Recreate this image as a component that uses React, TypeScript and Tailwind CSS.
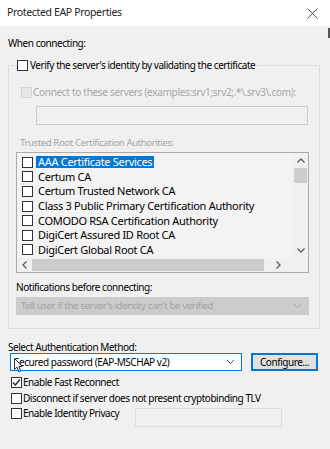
import React from "react";

const font = { fontFamily: '"Noto Sans", "Segoe UI", sans-serif' };

function Box({ checked = false, disabled = false }: { checked?: boolean; disabled?: boolean }) {
  return (
    <span
      className={`flex h-[11px] w-[11px] shrink-0 items-center justify-center border ${
        disabled ? "border-[#d4d4d4] bg-[#e8e8e8]" : "border-[#333333] bg-white"
      }`}
    >
      {checked && (
        <svg width="9" height="9" viewBox="0 0 9 9" fill="none">
          <path d="M1 4.5 L3.4 7 L8 1.5" stroke="#222" strokeWidth="1.3" />
        </svg>
      )}
    </span>
  );
}

function Chevron({ color = "#555" }: { color?: string }) {
  return (
    <svg width="9" height="6" viewBox="0 0 9 6" fill="none">
      <path d="M1 1 L4.5 4.5 L8 1" stroke={color} strokeWidth="1" />
    </svg>
  );
}

const certs = [
  "AAA Certificate Services",
  "Certum CA",
  "Certum Trusted Network CA",
  "Class 3 Public Primary Certification Authority",
  "COMODO RSA Certification Authority",
  "DigiCert Assured ID Root CA",
  "DigiCert Global Root CA",
];

export default function App() {
  return (
    <div
      className="relative h-[449px] w-[330px] overflow-hidden bg-[#f0f0f0] text-[10px] tracking-[-0.45px] text-black"
      style={font}
    >
      {/* title bar */}
      <div className="flex h-[26px] items-center justify-between bg-white pl-[7px] pr-[12px]">
        <span className="text-[10.5px] tracking-[-0.35px] text-[#222]">Protected EAP Properties</span>
        <svg width="11" height="11" viewBox="0 0 11 11" fill="none">
          <path d="M0.5 0.5 L10.5 10.5 M10.5 0.5 L0.5 10.5" stroke="#444" strokeWidth="0.9" />
        </svg>
      </div>
      <div className="absolute right-0 top-[28px] h-[10px] w-[2px] bg-[#555]" />

      <div className="mt-[9px] flex h-[16px] items-center pl-[8px]">When connecting:</div>

      {/* group box */}
      <div className="ml-[8px] mt-[14px] h-[264px] w-[312px] border border-[#dcdcdc]">
        <div className="-mt-[9px] ml-[8px] flex h-[16px] w-fit items-center gap-[2px] bg-[#f0f0f0] pr-[2px]">
          <Box />
          <span>Verify the server's identity by validating the certificate</span>
        </div>

        <div className="ml-[12px] mt-[11px] flex h-[16px] items-center gap-[1px] tracking-[-0.3px] text-[#a6a6a6]">
          <Box disabled />
          <span>Connect to these servers (examples:srv1;srv2;.*\.srv3\.com):</span>
        </div>

        <div className="ml-[27px] mt-[6px] h-[19px] w-[272px] border border-[#cccccc] bg-[#f0f0f0]" />

        <div className="ml-[11px] mt-[10px] flex h-[16px] items-center text-[9.7px] text-[#a6a6a6]">
          Trusted Root Certification Authorities:
        </div>

        {/* list */}
        <div className="ml-[7px] mt-[1px] flex h-[121px] w-[293px] flex-col border border-[#ababab] bg-[#f3f3f3]">
          <div className="flex h-[105px]">
            <div className="flex-1 overflow-hidden pt-[2px] text-[11px] tracking-[-0.3px]">
              {certs.map((c, i) => (
                <div key={c} className="flex h-[14.6px] items-center gap-[3px] pl-[5px] whitespace-nowrap">
                  <Box />
                  <span className={i === 0 ? "bg-[#0078d7] px-[2px] leading-[12px] text-white" : "px-[2px] leading-[12px]"}>
                    {c}
                  </span>
                </div>
              ))}
            </div>
            <div className="flex w-[15px] flex-col items-center bg-[#f0f0f0]">
              <div className="flex h-[15px] items-center justify-center">
                <svg width="8" height="5" viewBox="0 0 8 5" fill="none">
                  <path d="M0.5 4.5 L4 1 L7.5 4.5" stroke="#606060" strokeWidth="1.3" />
                </svg>
              </div>
              <div className="h-[15px] w-[13px] bg-[#cdcdcd]" />
              <div className="flex-1" />
              <div className="flex h-[15px] items-center justify-center">
                <svg width="8" height="5" viewBox="0 0 8 5" fill="none">
                  <path d="M0.5 0.5 L4 4 L7.5 0.5" stroke="#606060" strokeWidth="1.3" />
                </svg>
              </div>
            </div>
          </div>
          <div className="flex h-[14px] items-center bg-[#f0f0f0]">
            <div className="flex h-full w-[15px] items-center justify-center">
              <svg width="5" height="8" viewBox="0 0 5 8" fill="none">
                <path d="M4.5 0.5 L1 4 L4.5 7.5" stroke="#606060" strokeWidth="1.3" />
              </svg>
            </div>
            <div className="h-[12px] w-[232px] bg-[#cdcdcd]" />
            <div className="flex h-full flex-1 items-center justify-center">
              <svg width="5" height="8" viewBox="0 0 5 8" fill="none">
                <path d="M0.5 0.5 L4 4 L0.5 7.5" stroke="#606060" strokeWidth="1.3" />
              </svg>
            </div>
            <div className="h-full w-[15px] bg-[#f0f0f0]" />
          </div>
        </div>

        <div className="ml-[7px] mt-[6px] flex h-[16px] items-center">Notifications before connecting:</div>

        <div className="ml-[7px] mt-[2px] flex h-[18px] w-[293px] items-center justify-between border border-[#cccccc] bg-[#cccccc] pl-[4px] pr-[6px] text-[9.8px] text-[#a3a3a3]">
          <span>Tell user if the server's identity can't be verified</span>
          <Chevron color="#a8a8a8" />
        </div>
      </div>

      <div className="mt-[10px] flex h-[16px] items-center pl-[8px]">Select Authentication Method:</div>

      <div className="mt-[-2px] flex items-center pl-[10px]">
        <div className="relative flex h-[18px] w-[232px] items-center justify-between border border-[#0078d7] bg-white pl-[3px] pr-[6px]">
          <span>Secured password (EAP-MSCHAP v2)</span>
          <Chevron />
          <svg className="absolute left-[3px] top-[4px]" width="10" height="15" viewBox="0 0 10 15">
            <path d="M0.5 0.5 L0.5 11.5 L3 9.2 L5 13.8 L6.8 13 L4.8 8.5 L8.2 8.5 Z" fill="white" stroke="black" strokeWidth="0.8" />
          </svg>
        </div>
        <div className="ml-[9px] flex h-[18px] w-[67px] items-center justify-center border-2 border-[#0078d7] bg-[#e1e1e1]">
          Configure...
        </div>
      </div>

      <div className="mt-[4px] flex h-[15.5px] items-center gap-[1px] pl-[11px]">
        <Box checked />
        <span>Enable Fast Reconnect</span>
      </div>
      <div className="flex h-[15.5px] items-center gap-[1px] pl-[11px]">
        <Box />
        <span>Disconnect if server does not present cryptobinding TLV</span>
      </div>
      <div className="flex h-[15.5px] items-start pl-[11px]">
        <div className="flex h-[15.5px] items-center gap-[1px]">
          <Box />
          <span>Enable Identity Privacy</span>
        </div>
        <div className="ml-auto mr-[48px] mt-[2px] h-[19px] w-[147px] border border-[#dcdcdc] bg-[#f0f0f0]" />
      </div>
    </div>
  );
}
